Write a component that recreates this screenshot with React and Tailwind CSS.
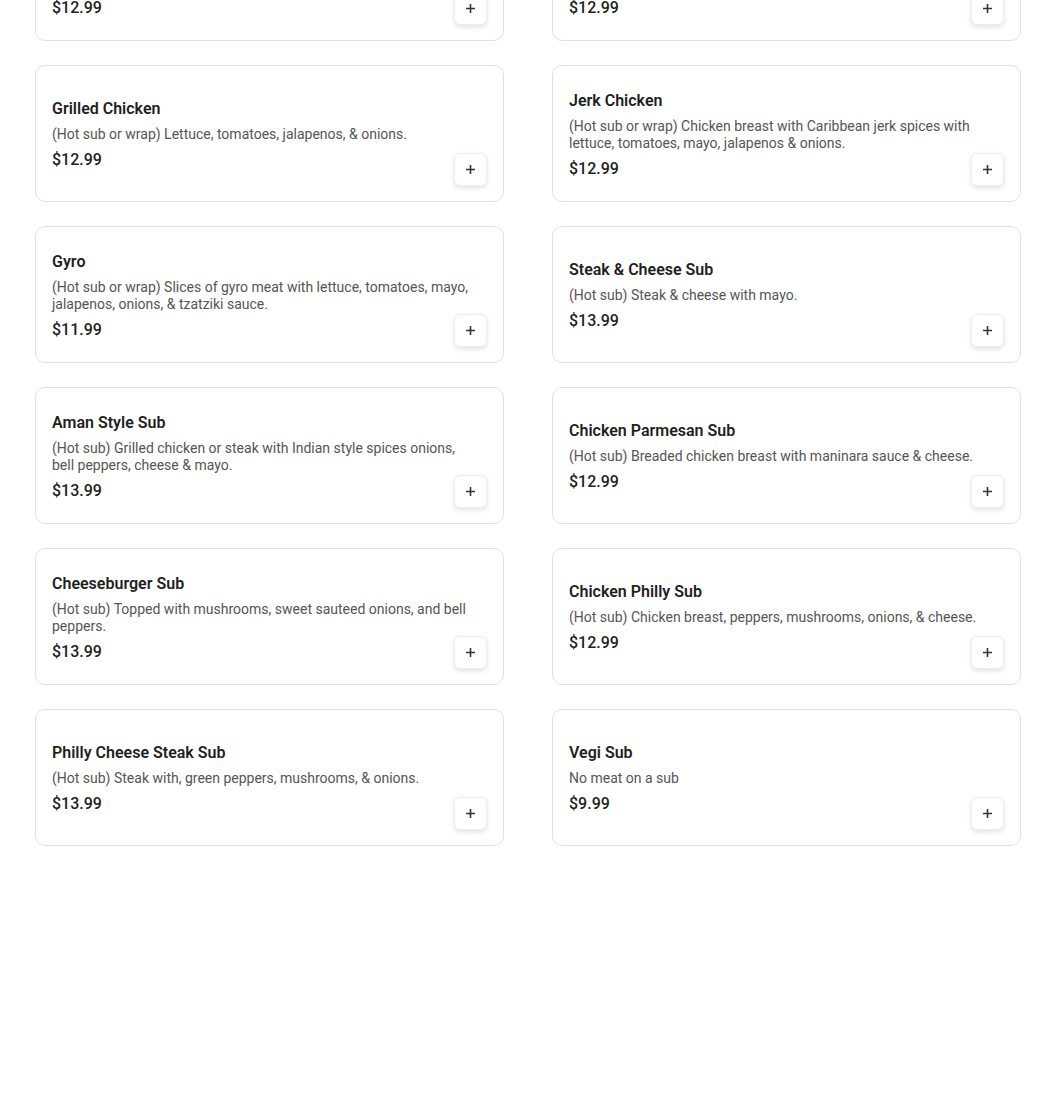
import React from 'react';

const items = [
  { name: 'Chicken Sub', desc: '(Hot sub or wrap) Chicken breast with lettuce, tomatoes, mayo, jalapenos, onions, & cheese.', price: '$12.99' },
  { name: 'Steak Sub', desc: '(Hot sub or wrap) Steak with lettuce, tomatoes, mayo, jalapenos, onions, green peppers & cheese.', price: '$12.99' },
  { name: 'Grilled Chicken', desc: '(Hot sub or wrap) Lettuce, tomatoes, jalapenos, & onions.', price: '$12.99' },
  { name: 'Jerk Chicken', desc: '(Hot sub or wrap) Chicken breast with Caribbean jerk spices with lettuce, tomatoes, mayo, jalapenos & onions.', price: '$12.99' },
  { name: 'Gyro', desc: '(Hot sub or wrap) Slices of gyro meat with lettuce, tomatoes, mayo, jalapenos, onions, & tzatziki sauce.', price: '$11.99' },
  { name: 'Steak & Cheese Sub', desc: '(Hot sub) Steak & cheese with mayo.', price: '$13.99' },
  { name: 'Aman Style Sub', desc: '(Hot sub) Grilled chicken or steak with Indian style spices onions, bell peppers, cheese & mayo.', price: '$13.99' },
  { name: 'Chicken Parmesan Sub', desc: '(Hot sub) Breaded chicken breast with maninara sauce & cheese.', price: '$12.99' },
  { name: 'Cheeseburger Sub', desc: '(Hot sub) Topped with mushrooms, sweet sauteed onions, and bell peppers.', price: '$13.99' },
  { name: 'Chicken Philly Sub', desc: '(Hot sub) Chicken breast, peppers, mushrooms, onions, & cheese.', price: '$12.99' },
  { name: 'Philly Cheese Steak Sub', desc: '(Hot sub) Steak with, green peppers, mushrooms, & onions.', price: '$13.99' },
  { name: 'Vegi Sub', desc: 'No meat on a sub', price: '$9.99' },
];

const PlusIcon = () => (
  <svg width="11" height="11" viewBox="0 0 11 11" fill="none">
    <path d="M5.5 1v9M1 5.5h9" stroke="#333" strokeWidth="1.6" />
  </svg>
);

// Single menu card: text block centered, add button pinned bottom right
const MenuCard = ({ item }) => (
  <div className="relative flex h-[137px] items-center rounded-[10px] border border-[#e2e2e2] bg-white px-4 pt-[17px] pb-[15px]">
    <div className="w-[420px]">
      <div className="text-base font-semibold leading-6 text-[#1f1f1f]">{item.name}</div>
      <div className="mt-[5px] text-sm leading-[17px] text-[#555]">{item.desc}</div>
      <div className="mt-[5px] text-base font-medium leading-6 text-[#1f1f1f]">{item.price}</div>
    </div>
    <button className="absolute bottom-[15px] right-[16px] flex h-[33px] w-[33px] items-center justify-center rounded-md border border-[#eee] bg-white shadow-[0_2px_5px_rgba(0,0,0,0.12)]">
      <PlusIcon />
    </button>
  </div>
);

export default function App() {
  return (
    <div className="min-h-[1104px] overflow-hidden bg-white" style={{ fontFamily: 'Roboto, "Noto Sans", sans-serif' }}>
      <div className="mt-[-96px] grid grid-cols-[469px_469px] gap-x-[48px] gap-y-[24px] pl-[35px]">
        {items.map((item, i) => (
          <MenuCard key={i} item={item} />
        ))}
      </div>
    </div>
  );
}
